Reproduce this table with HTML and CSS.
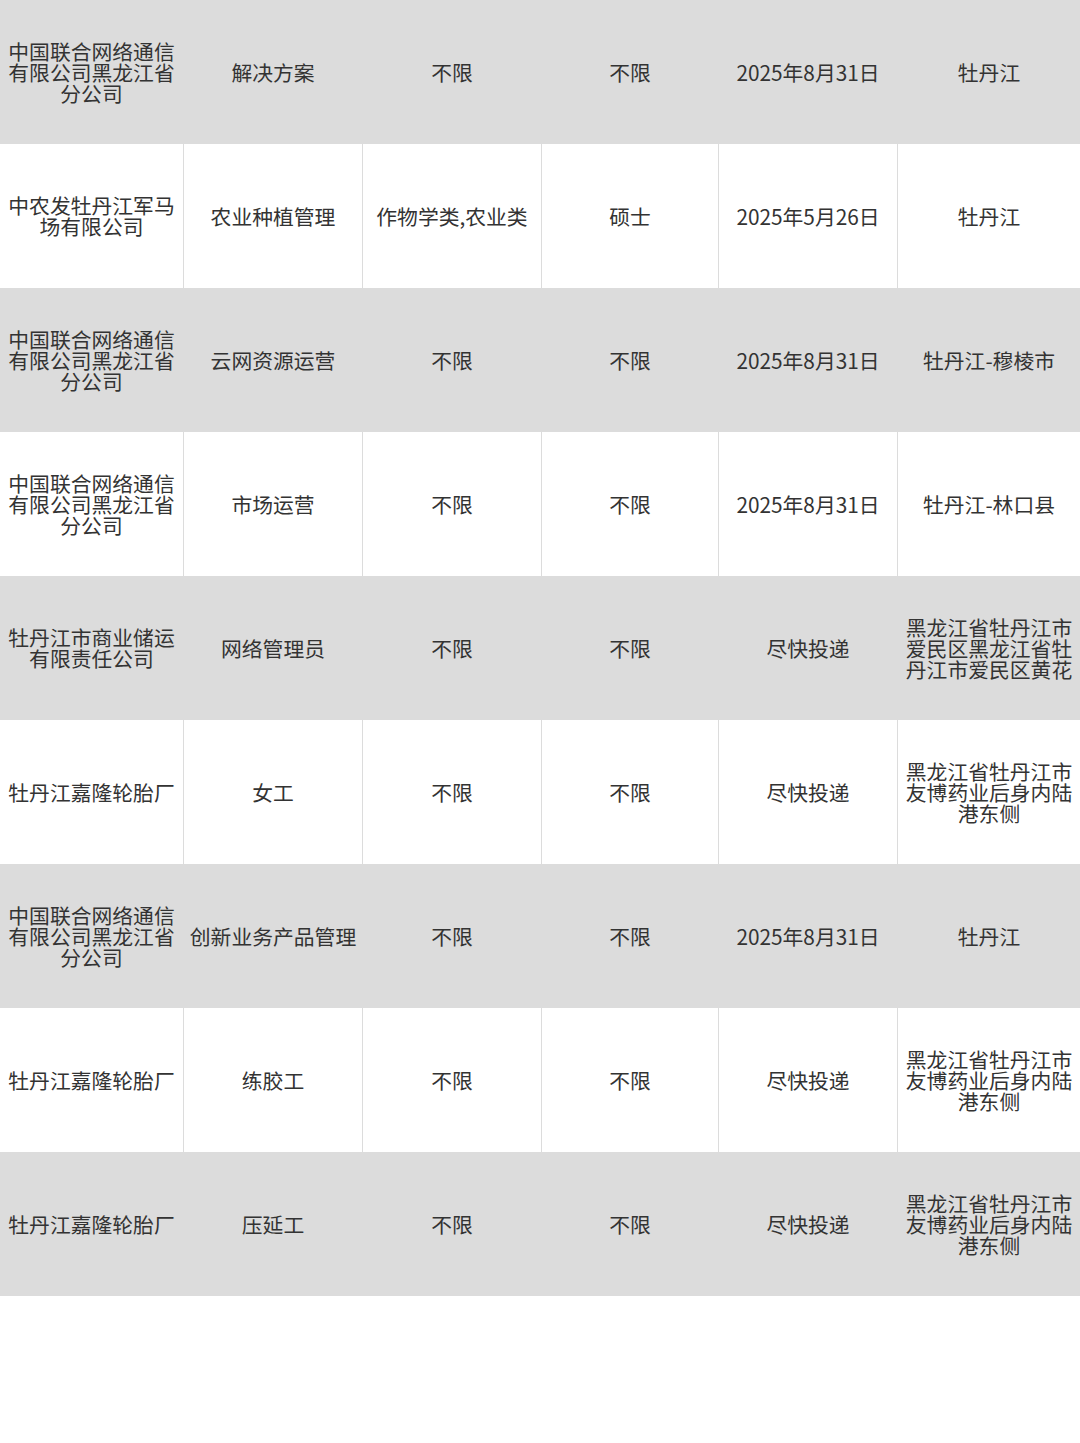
FILE: index.html
```html
<!DOCTYPE html>
<html lang="zh-CN">
<head>
<meta charset="utf-8">
<title>岗位表</title>
<link rel="stylesheet" href="styles.css">
</head>
<body>
<div class="table">
  <div class="row gray">
    <div class="cell">中国联合网络通信有限公司黑龙江省分公司</div>
    <div class="cell">解决方案</div>
    <div class="cell">不限</div>
    <div class="cell">不限</div>
    <div class="cell">2025年8月31日</div>
    <div class="cell">牡丹江</div>
  </div>
  <div class="row white">
    <div class="cell">中农发牡丹江军马场有限公司</div>
    <div class="cell">农业种植管理</div>
    <div class="cell">作物学类,农业类</div>
    <div class="cell">硕士</div>
    <div class="cell">2025年5月26日</div>
    <div class="cell">牡丹江</div>
  </div>
  <div class="row gray">
    <div class="cell">中国联合网络通信有限公司黑龙江省分公司</div>
    <div class="cell">云网资源运营</div>
    <div class="cell">不限</div>
    <div class="cell">不限</div>
    <div class="cell">2025年8月31日</div>
    <div class="cell">牡丹江-穆棱市</div>
  </div>
  <div class="row white">
    <div class="cell">中国联合网络通信有限公司黑龙江省分公司</div>
    <div class="cell">市场运营</div>
    <div class="cell">不限</div>
    <div class="cell">不限</div>
    <div class="cell">2025年8月31日</div>
    <div class="cell">牡丹江-林口县</div>
  </div>
  <div class="row gray">
    <div class="cell">牡丹江市商业储运有限责任公司</div>
    <div class="cell">网络管理员</div>
    <div class="cell">不限</div>
    <div class="cell">不限</div>
    <div class="cell">尽快投递</div>
    <div class="cell">黑龙江省牡丹江市爱民区黑龙江省牡丹江市爱民区黄花</div>
  </div>
  <div class="row white">
    <div class="cell">牡丹江嘉隆轮胎厂</div>
    <div class="cell">女工</div>
    <div class="cell">不限</div>
    <div class="cell">不限</div>
    <div class="cell">尽快投递</div>
    <div class="cell">黑龙江省牡丹江市友博药业后身内陆港东侧</div>
  </div>
  <div class="row gray">
    <div class="cell">中国联合网络通信有限公司黑龙江省分公司</div>
    <div class="cell">创新业务产品管理</div>
    <div class="cell">不限</div>
    <div class="cell">不限</div>
    <div class="cell">2025年8月31日</div>
    <div class="cell">牡丹江</div>
  </div>
  <div class="row white">
    <div class="cell">牡丹江嘉隆轮胎厂</div>
    <div class="cell">练胶工</div>
    <div class="cell">不限</div>
    <div class="cell">不限</div>
    <div class="cell">尽快投递</div>
    <div class="cell">黑龙江省牡丹江市友博药业后身内陆港东侧</div>
  </div>
  <div class="row gray">
    <div class="cell">牡丹江嘉隆轮胎厂</div>
    <div class="cell">压延工</div>
    <div class="cell">不限</div>
    <div class="cell">不限</div>
    <div class="cell">尽快投递</div>
    <div class="cell">黑龙江省牡丹江市友博药业后身内陆港东侧</div>
  </div>
</div>
</body>
</html>
```

FILE: styles.css
```css
html, body {
  margin: 0;
  padding: 0;
  background: #ffffff;
}

body {
  width: 1080px;
  height: 1443px;
  font-family: "Noto Sans CJK SC", "Noto Sans", sans-serif;
  color: #333333;
}

.table {
  display: flex;
  flex-direction: column;
}

.row {
  display: grid;
  grid-template-columns: 183px 178px 178px 176px 178px 182px;
  column-gap: 1px;
  height: 144px;
  background: #dcdcdc;
}

.cell {
  display: flex;
  align-items: center;
  justify-content: center;
  text-align: center;
  padding: 0 4px;
  font-size: 20.8px;
  line-height: 21px;
  overflow: hidden;
}

.white .cell {
  background: #ffffff;
}
```
